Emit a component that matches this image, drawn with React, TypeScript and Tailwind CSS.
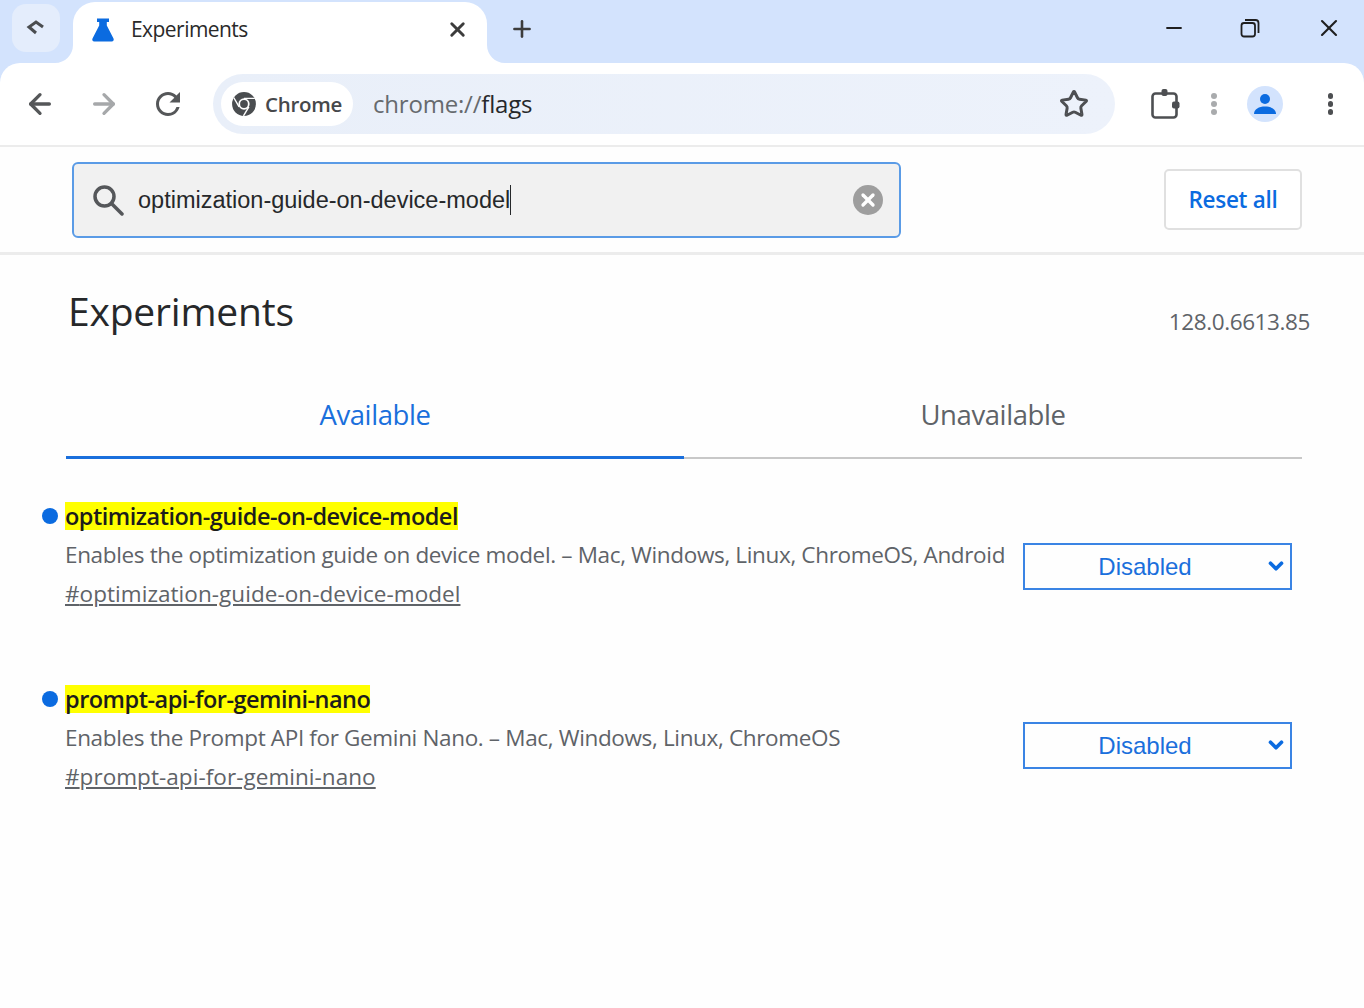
import { ArrowLeft, ArrowRight, Star, X, Plus, Minus, ChevronDown } from "lucide-react";

const FlaskIcon = () => (
  <svg width="24" height="26" viewBox="0 0 24 26">
    <path d="M6 1.5h12v3.5h-2.2v3.5L22.5 21.5c.7 1.6-.1 3-1.8 3H3.3c-1.7 0-2.5-1.4-1.8-3L8.2 8.500V5H6z" fill="#0b6be0" />
  </svg>
);

const ChromeIcon = () => (
  <svg width="26" height="26" viewBox="0 0 24 24">
    <circle cx="12" cy="12" r="11" fill="#4a4d50" />
    <circle cx="12" cy="12" r="5.2" fill="#fff" />
    <circle cx="12" cy="12" r="3.600" fill="#4a4d50" />
    <path d="M12 6.800H22M7.500 14.600L2.500 6M16.500 14.600L11.500 23" stroke="#fff" strokeWidth="1.300" fill="none" />
  </svg>
);

const ExtensionIcon = () => (
  <svg width="30" height="32" viewBox="0 0 30 32" fill="none">
    <rect x="2.500" y="5.500" width="24" height="24" rx="3" stroke="#4d4f52" strokeWidth="2.600" />
    <rect x="11.500" y="1" width="6" height="7" rx="2" fill="#4d4f52" />
    <rect x="22" y="13.500" width="7.500" height="7" rx="2" fill="#4d4f52" />
  </svg>
);

const ReloadIcon = () => (
  <svg width="36" height="36" viewBox="0 0 24 24">
    <path d="M17.65 6.35A7.958 7.958 0 0 0 12 4c-4.42 0-7.99 3.58-7.99 8s3.57 8 7.99 8c3.73 0 6.84-2.55 7.73-6h-2.08A5.99 5.99 0 0 1 12 18c-3.31 0-6-2.69-6-6s2.69-6 6-6c1.66 0 3.14.69 4.22 1.78L13 11h7V4l-2.35 2.35z" fill="#555759" />
  </svg>
);

const SearchIcon = () => (
  <svg width="32" height="32" viewBox="0 0 32 32" fill="none" stroke="#55575a" strokeWidth="3.500">
    <circle cx="12.500" cy="12.500" r="9.500" />
    <path d="M19.500 19.500L30 30" strokeLinecap="round" />
  </svg>
);

const RestoreIcon = () => (
  <svg width="20" height="20" viewBox="0 0 20 20" fill="none" stroke="#1f1f1f" strokeWidth="1.800">
    <rect x="1.500" y="5" width="13.500" height="13.500" rx="2.500" />
    <path d="M5 2h10.500a3 3 0 0 1 3 3v10" />
  </svg>
);

const TabSearchIcon = () => (
  <svg width="20" height="18" viewBox="0 0 20 18" fill="none" stroke="#4a4d50" strokeWidth="3" strokeLinejoin="miter">
    <path d="M17 8L10 3L3 8L10 14" />
  </svg>
);

const Dots = ({ color }: { color: string }) => (
  <div className="flex flex-col gap-[2.500px]">
    <span className={`w-[5.500px] h-[5.500px] rounded-full ${color}`} />
    <span className={`w-[5.500px] h-[5.500px] rounded-full ${color}`} />
    <span className={`w-[5.500px] h-[5.500px] rounded-full ${color}`} />
  </div>
);

const FlagSelect = () => (
  <div className="relative flex items-center justify-center w-[269px] h-[47px] pr-[25px] border-2 border-[#3a84e4] text-[#1a6fdc] text-[24px] font-['Liberation_Sans',sans-serif]">
    Disabled
    <ChevronDown size={22} strokeWidth={4} className="absolute right-[3px] top-[10px] text-[#0b6be0]" />
  </div>
);

const Flag = ({ name, desc, mt, selectPt }: { name: string; desc: string; mt: string; selectPt: string }) => (
  <div className={`flex justify-between pl-[42px] pr-[72px] ${mt}`}>
    <div className="flex flex-col">
      <div className="flex items-center gap-[7px] h-[28px]">
        <span className="w-4 h-4 rounded-full bg-[#0b6be0]" />
        <span className="bg-[#ffff00] h-[28px] leading-[28px] text-[23.500px] font-semibold text-[#1c1c1c] tracking-[-0.5px]">{name}</span>
      </div>
      <p className="ml-[23px] mt-[9px] leading-[32px] text-[22.500px] text-[#5f6368] tracking-[-0.35px] whitespace-nowrap">{desc}</p>
      <a className="ml-[23px] mt-[7px] leading-[32px] text-[22.500px] text-[#5f6368] underline tracking-[0.05px]">#{name}</a>
    </div>
    <div className={selectPt}>
      <FlagSelect />
    </div>
  </div>
);

export default function App() {
  return (
    <div className="w-[1364px] h-[1008px] overflow-hidden flex flex-col bg-[#fefefe] font-['Open_Sans',sans-serif]">
      {/* title bar */}
      <div className="flex h-[63px] shrink-0 bg-[#d3e3fd] pl-[12px]">
        <div className="mt-[4px] w-[48px] h-[48px] rounded-[14px] bg-[#e4edfc] flex items-center justify-center">
          <TabSearchIcon />
        </div>
        <div className="relative ml-[13px] mt-[2px] w-[414px] h-[61px] rounded-t-[22px] bg-white flex items-center pl-[18px] pr-[18px] pb-[6px]">
          <FlaskIcon />
          <span className="ml-[16px] text-[21px] text-[#2a2a2a] tracking-[-0.55px]">Experiments</span>
          <X size={23} strokeWidth={3} className="ml-auto text-[#3c3c3c]" />
          <svg className="absolute left-[-18px] bottom-0" width="18" height="18" viewBox="0 0 18 18">
            <path d="M18 0V18H0C10 18 18 10 18 0Z" fill="#fff" />
          </svg>
          <svg className="absolute right-[-18px] bottom-0" width="18" height="18" viewBox="0 0 18 18">
            <path d="M0 0V18H18C8 18 0 10 0 0Z" fill="#fff" />
          </svg>
        </div>
        <div className="ml-[22px] pb-[6px] flex items-center">
          <Plus size={26} strokeWidth={2.400} className="text-[#3c3c3c]" />
        </div>
        <div className="ml-auto flex items-center pb-[8px] pr-[21px]">
          <Minus size={24} strokeWidth={1.800} className="text-[#1f1f1f]" />
          <div className="ml-[54px]"><RestoreIcon /></div>
          <X size={28} strokeWidth={1.800} className="ml-[55px] text-[#1f1f1f]" />
        </div>
      </div>

      {/* toolbar */}
      <div className="bg-[#d3e3fd] shrink-0">
        <div className="flex items-center h-[82px] rounded-t-[20px] bg-white pl-[24px]">
          <ArrowLeft size={32} strokeWidth={2.500} className="text-[#555759]" />
          <ArrowRight size={32} strokeWidth={2.500} className="ml-[32px] text-[#a6a8aa]" />
          <div className="ml-[30px]"><ReloadIcon /></div>
          <div className="ml-[27px] w-[902px] h-[60px] rounded-full bg-gradient-to-r from-[#e9eff9] to-[#edf2fb] flex items-center pl-[8px] pr-[26px]">
            <div className="w-[132px] h-[44px] rounded-full bg-white flex items-center pl-[10px] gap-[8px]">
              <ChromeIcon />
              <span className="text-[20.500px] font-semibold text-[#46484b] tracking-[-0.3px]">Chrome</span>
            </div>
            <span className="ml-[20px] text-[24px] text-[#666a6e] tracking-[-0.2px]">
              chrome://<span className="text-[#26282a]">flags</span>
            </span>
            <Star size={30} strokeWidth={2.400} className="ml-auto text-[#4d4f52]" />
          </div>
          <div className="ml-[35px]"><ExtensionIcon /></div>
          <div className="ml-[31px]"><Dots color="bg-[#a9abad]" /></div>
          <div className="ml-[30px] w-[36px] h-[36px] rounded-full bg-[#d3e3fd] flex items-center justify-center">
            <svg width="28" height="28" viewBox="0 0 28 28">
              <circle cx="14" cy="9" r="5" fill="#0b6be0" />
              <path d="M3 24c0-5 5-7.500 11-7.500s11 2.500 11 7.500z" fill="#0b6be0" />
            </svg>
          </div>
          <div className="ml-[45px]"><Dots color="bg-[#4d4f52]" /></div>
        </div>
      </div>

      {/* search bar */}
      <div className="flex items-center shrink-0 h-[110px] border-t-2 border-b-[3px] border-[#ececec] pl-[72px] pr-[62px]">
        <div className="w-[829px] h-[76px] rounded-[6px] border-2 border-[#5a9be6] bg-[#f1f1f1] flex items-center pl-[18px] pr-[16px]">
          <SearchIcon />
          <span className="ml-[14px] text-[23.500px] text-[#26282a] font-['Liberation_Sans',sans-serif] border-r-[1.500px] border-[#26282a] leading-[30px]">optimization-guide-on-device-model</span>
          <div className="ml-auto w-[30px] h-[30px] rounded-full bg-[#9e9e9e] flex items-center justify-center">
            <X size={20} strokeWidth={4} className="text-white" />
          </div>
        </div>
        <button className="ml-auto w-[138px] h-[61px] rounded-[5px] border-2 border-[#e0e0e0] bg-white text-[22.500px] font-semibold text-[#0b6be0] tracking-[-0.3px]">Reset all</button>
      </div>

      {/* content */}
      <div className="flex items-start justify-between pl-[68px] pr-[54px] pt-[29px]">
        <h1 className="text-[39px] leading-[54px] text-[#26282a] tracking-[-0.2px]">Experiments</h1>
        <span className="mt-[22px] text-[22.500px] leading-[32px] text-[#5f6368] tracking-[-0.4px]">128.0.6613.85</span>
      </div>

      <div className="flex mt-[55px] ml-[66px] w-[1236px] h-[66px]">
        <div className="flex-1 flex items-center justify-center pb-[20px] border-b-[3px] border-[#1a6fdc] text-[27.500px] text-[#1a6fdc] tracking-[-0.4px]">Available</div>
        <div className="flex-1 flex items-center justify-center pb-[20px] border-b-2 border-[#c8c8c8] text-[27.500px] text-[#5f6368] tracking-[-0.4px]">Unavailable</div>
      </div>

      <Flag mt="mt-[43px]" selectPt="pt-[41px]" name="optimization-guide-on-device-model" desc="Enables the optimization guide on device model. – Mac, Windows, Linux, ChromeOS, Android" />
      <Flag mt="mt-[75px]" selectPt="pt-[37px]" name="prompt-api-for-gemini-nano" desc="Enables the Prompt API for Gemini Nano. – Mac, Windows, Linux, ChromeOS" />
    </div>
  );
}
